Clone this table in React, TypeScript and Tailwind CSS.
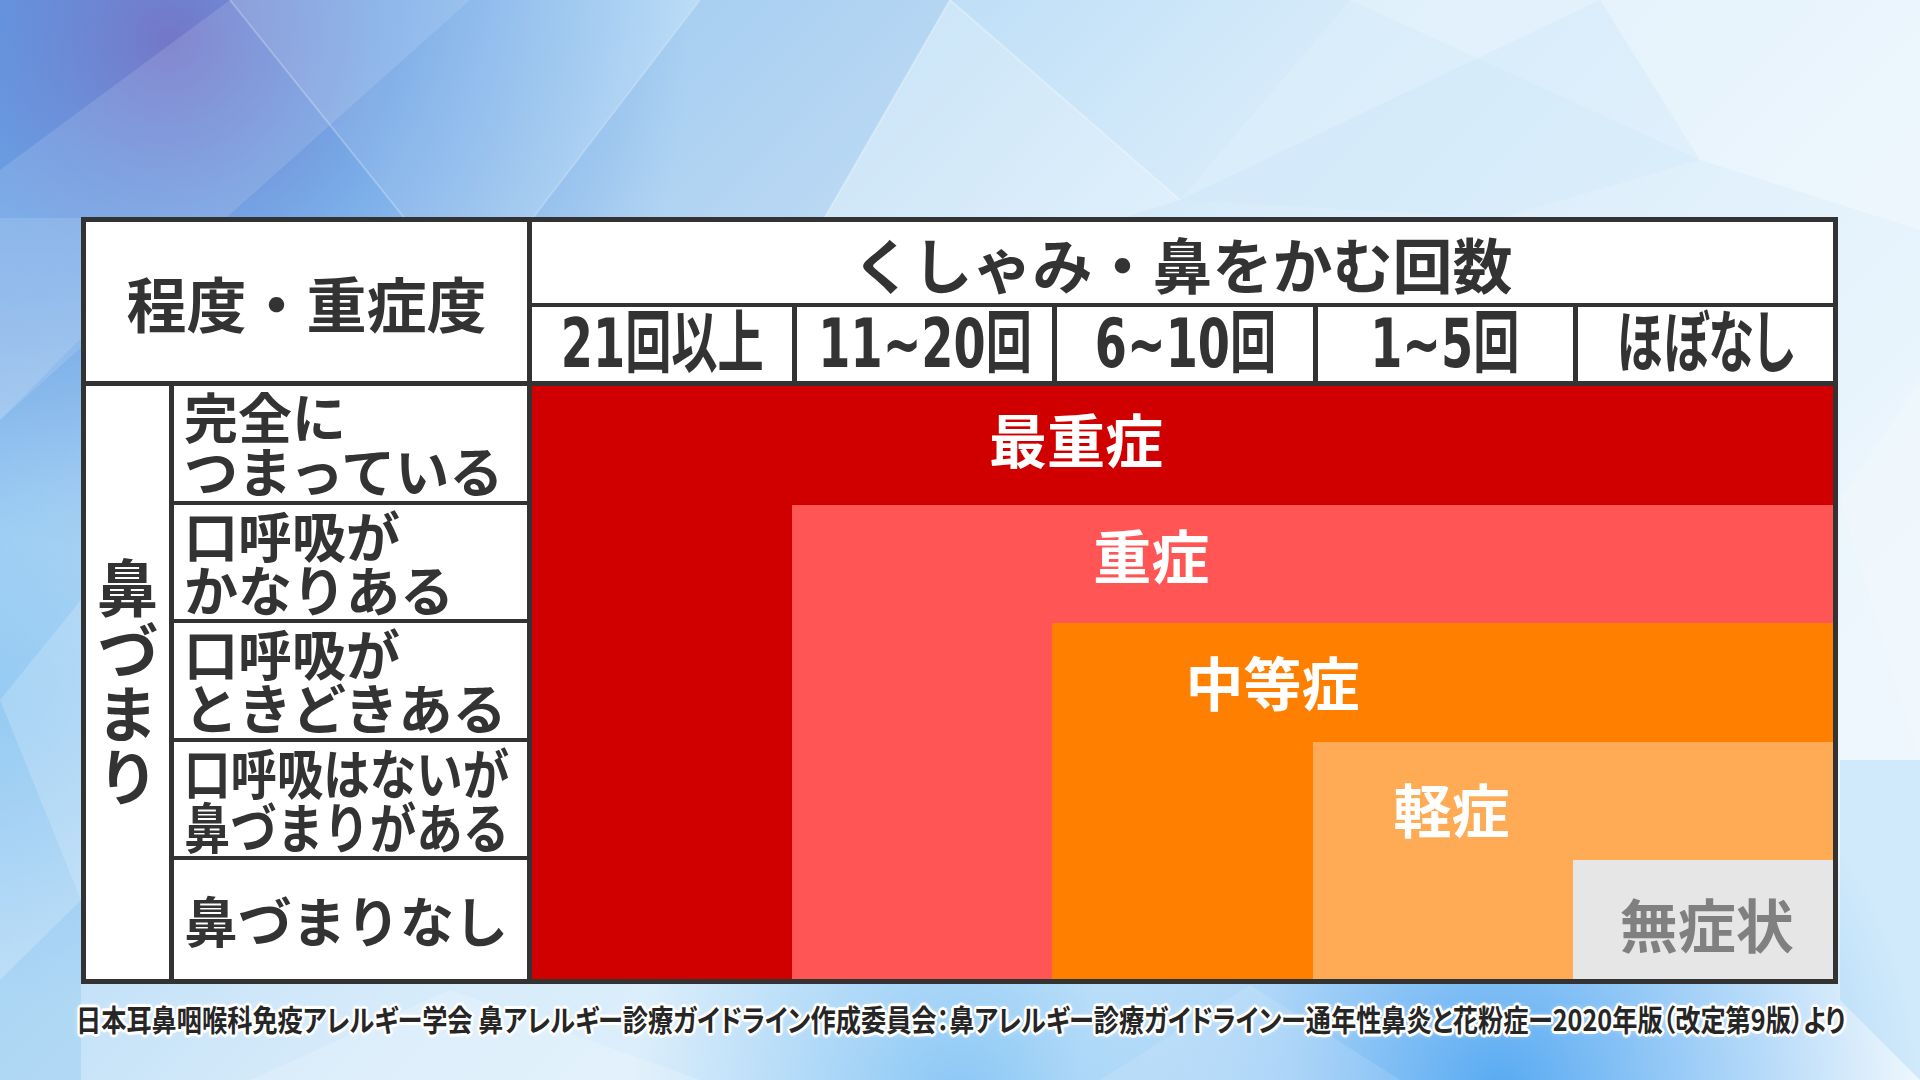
import React from 'react'

const counts = ['21回以上', '11~20回', '6~10回', '1~5回', 'ほぼなし']

const symptoms: { lines: string[]; squeeze?: boolean }[] = [
  { lines: ['完全に', 'つまっている'] },
  { lines: ['口呼吸が', 'かなりある'] },
  { lines: ['口呼吸が', 'ときどきある'] },
  { lines: ['口呼吸はないが', '鼻づまりがある'], squeeze: true },
  { lines: ['鼻づまりなし'] },
]

const RED = 'bg-[#d00000]'
const PINK = 'bg-[#ff5555]'
const ORANGE = 'bg-[#ff8000]'
const LIGHT = 'bg-[#ffaa55]'

function Background() {
  return (
    <svg className="absolute inset-0" width="1920" height="1080" viewBox="0 0 1920 1080" preserveAspectRatio="none">
      <defs>
        <linearGradient id="base" x1="0" y1="0" x2="1" y2="0.55">
          <stop offset="0" stopColor="#6aa2e4" />
          <stop offset="0.22" stopColor="#a9d3f4" />
          <stop offset="0.55" stopColor="#d6ebfa" />
          <stop offset="1" stopColor="#eef7fd" />
        </linearGradient>
        <radialGradient id="purple" cx="170" cy="40" r="520" gradientUnits="userSpaceOnUse">
          <stop offset="0" stopColor="#7270c4" stopOpacity="0.9" />
          <stop offset="0.45" stopColor="#5c93e0" stopOpacity="0.6" />
          <stop offset="1" stopColor="#5c93e0" stopOpacity="0" />
        </radialGradient>
        <radialGradient id="blueA" cx="1500" cy="1090" r="420" gradientUnits="userSpaceOnUse">
          <stop offset="0" stopColor="#3d9cf0" stopOpacity="0.85" />
          <stop offset="1" stopColor="#3d9cf0" stopOpacity="0" />
        </radialGradient>
        <radialGradient id="blueB" cx="960" cy="1100" r="330" gradientUnits="userSpaceOnUse">
          <stop offset="0" stopColor="#62b4f2" stopOpacity="0.7" />
          <stop offset="1" stopColor="#62b4f2" stopOpacity="0" />
        </radialGradient>
        <radialGradient id="blueC" cx="0" cy="700" r="300" gradientUnits="userSpaceOnUse">
          <stop offset="0" stopColor="#8cc6f2" stopOpacity="0.7" />
          <stop offset="1" stopColor="#8cc6f2" stopOpacity="0" />
        </radialGradient>
      </defs>
      <rect width="1920" height="1080" fill="url(#base)" />
      <rect width="1920" height="1080" fill="url(#purple)" />
      <rect width="1920" height="1080" fill="url(#blueA)" />
      <rect width="1920" height="1080" fill="url(#blueB)" />
      <rect width="1920" height="1080" fill="url(#blueC)" />
      {/* facets */}
      <polygon points="0,170 230,0 470,0 0,420" fill="#ffffff" opacity="0.12" />
      <polygon points="230,0 470,300 700,0" fill="#ffffff" opacity="0.1" />
      <polygon points="470,300 700,0 950,0 760,330" fill="#3a6fd0" opacity="0.08" />
      <polygon points="760,330 950,0 1180,200" fill="#ffffff" opacity="0.22" />
      <polygon points="1180,200 1350,0 1600,0" fill="#ffffff" opacity="0.25" />
      <polygon points="1600,0 1920,0 1920,230 1700,160" fill="#ffffff" opacity="0.3" />
      <polygon points="1350,0 1180,200 1500,218 1700,160" fill="#cfe8fa" opacity="0.35" />
      <polygon points="0,420 200,218 0,218" fill="#ffffff" opacity="0.12" />
      <polygon points="0,700 81,600 81,900" fill="#ffffff" opacity="0.18" />
      <polygon points="0,980 81,900 81,1080 0,1080" fill="#7fbff0" opacity="0.3" />
      <polygon points="250,1080 450,990 700,1080" fill="#ffffff" opacity="0.18" />
      <polygon points="1100,1080 1250,985 1400,1080" fill="#ffffff" opacity="0.12" />
      <polygon points="1840,500 1920,380 1920,760" fill="#ffffff" opacity="0.2" />
      <polygon points="1840,760 1920,760 1920,1080 1840,1000" fill="#9bd0f5" opacity="0.35" />
      <line x1="230" y1="0" x2="470" y2="300" stroke="#ffffff" strokeOpacity="0.25" strokeWidth="2" />
      <line x1="470" y1="300" x2="700" y2="0" stroke="#ffffff" strokeOpacity="0.2" strokeWidth="2" />
      <line x1="760" y1="330" x2="950" y2="0" stroke="#ffffff" strokeOpacity="0.3" strokeWidth="2" />
      <line x1="950" y1="0" x2="1180" y2="200" stroke="#ffffff" strokeOpacity="0.3" strokeWidth="2" />
    </svg>
  )
}

function Label({ text, className }: { text: string; className: string }) {
  return <span className={`text-[58px] leading-none whitespace-nowrap ${className}`}>{text}</span>
}

export default function App() {
  return (
    <div className="relative w-[1920px] h-[1080px] overflow-hidden font-['Noto_Sans_CJK_JP','Noto_Sans',sans-serif]">
      <Background />

      <div className="relative flex flex-col pt-[217px]">
        {/* table */}
        <div className="ml-[81px] w-[1757px] h-[767px] border-[5px] border-[#333] bg-white flex flex-col text-[#333] font-bold">
          {/* header */}
          <div className="flex h-[164px] border-b-[5px] border-[#333]">
            <div className="w-[446px] shrink-0 border-r-[5px] border-[#333] flex items-center justify-center text-[60px] leading-none">
              程度・重症度
            </div>
            <div className="flex-1 flex flex-col">
              <div className="h-[85px] border-b-[4px] border-[#333] flex items-center justify-center text-[60px] leading-none">
                くしゃみ・鼻をかむ回数
              </div>
              <div className="flex-1 grid grid-cols-5">
                {counts.map((c, i) => (
                  <div
                    key={c}
                    className={`flex items-center justify-center ${i > 0 ? 'border-l-[5px] border-[#333]' : ''}`}
                  >
                    <span className="inline-block text-[68px] leading-none whitespace-nowrap scale-x-[0.68] font-['DejaVu_Sans','Noto_Sans_CJK_JP',sans-serif] [font-feature-settings:'palt']">
                      {c}
                    </span>
                  </div>
                ))}
              </div>
            </div>
          </div>

          {/* body */}
          <div className="flex-1 flex">
            <div className="w-[446px] shrink-0 flex border-r-[5px] border-[#333]">
              <div className="w-[88px] shrink-0 border-r-[5px] border-[#333] flex items-center justify-center">
                <span className="[writing-mode:vertical-rl] text-[62px] leading-none tracking-[1px]">鼻づまり</span>
              </div>
              <div className="flex-1 min-w-0 grid grid-rows-5">
                {symptoms.map((s, i) => (
                  <div
                    key={i}
                    className={`flex flex-col justify-center pl-[10px] text-[54px] leading-[54px] whitespace-nowrap ${i < 4 ? 'border-b-[4px] border-[#333]' : ''}`}
                  >
                    {s.lines.map(line => (
                      <span key={line} className={s.squeeze ? 'inline-block origin-left scale-x-[0.86]' : ''}>
                        {line}
                      </span>
                    ))}
                  </div>
                ))}
              </div>
            </div>

            {/* severity staircase */}
            <div className="flex-1 grid grid-cols-5 grid-rows-5">
              <div className={`col-span-5 ${RED} flex items-center pl-[457px] pb-[14px]`}>
                <Label text="最重症" className="text-white" />
              </div>

              <div className={RED} />
              <div className={`col-span-4 ${PINK} flex items-center pl-[301px] pb-[20px]`}>
                <Label text="重症" className="text-white" />
              </div>

              <div className={RED} />
              <div className={PINK} />
              <div className={`col-span-3 ${ORANGE} flex items-center pl-[133px] pb-[2px]`}>
                <Label text="中等症" className="text-white" />
              </div>

              <div className={RED} />
              <div className={PINK} />
              <div className={ORANGE} />
              <div className={`col-span-2 ${LIGHT} flex items-center pl-[81px] pt-[14px]`}>
                <Label text="軽症" className="text-white" />
              </div>

              <div className={RED} />
              <div className={PINK} />
              <div className={ORANGE} />
              <div className={LIGHT} />
              <div className="bg-[#e6e6e6] flex items-center pl-[47px] pt-[6px]">
                <Label text="無症状" className="text-[#808080]" />
              </div>
            </div>
          </div>
        </div>

        {/* source */}
        <div className="ml-[76px] mt-[19px] h-[30px]">
          <span className="inline-block origin-left scale-x-[0.84] whitespace-nowrap text-[30px] leading-none font-bold text-[#262626] [font-feature-settings:'palt'] [text-shadow:3px_0_0_#fff,-3px_0_0_#fff,0_3px_0_#fff,0_-3px_0_#fff,2px_2px_0_#fff,-2px_-2px_0_#fff,2px_-2px_0_#fff,-2px_2px_0_#fff,0_0_7px_#fff]">
            日本耳鼻咽喉科免疫アレルギー学会 鼻アレルギー診療ガイドライン作成委員会：鼻アレルギー診療ガイドラインー通年性鼻炎と花粉症ー2020年版（改定第9版）より
          </span>
        </div>
      </div>
    </div>
  )
}
